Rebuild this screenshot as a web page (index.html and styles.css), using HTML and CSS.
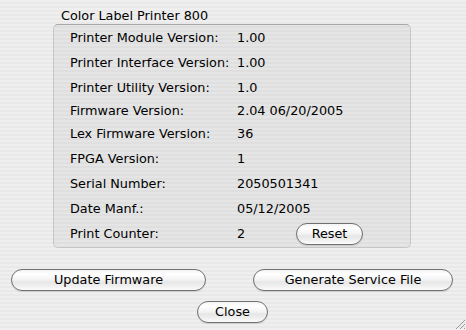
FILE: index.html
```html
<!DOCTYPE html>
<html>
<head>
<meta charset="utf-8">
<link rel="stylesheet" href="styles.css">
</head>
<body>
<div class="window">
  <div class="group-title">Color Label Printer 800</div>
  <div class="group-box">
    <div class="row"><span class="label">Printer Module Version:</span><span class="value">1.00</span></div>
    <div class="row"><span class="label">Printer Interface Version:</span><span class="value">1.00</span></div>
    <div class="row"><span class="label">Printer Utility Version:</span><span class="value">1.0</span></div>
    <div class="row short"><span class="label">Firmware Version:</span><span class="value">2.04 06/20/2005</span></div>
    <div class="row"><span class="label">Lex Firmware Version:</span><span class="value">36</span></div>
    <div class="row"><span class="label">FPGA Version:</span><span class="value">1</span></div>
    <div class="row"><span class="label">Serial Number:</span><span class="value">2050501341</span></div>
    <div class="row"><span class="label">Date Manf.:</span><span class="value">05/12/2005</span></div>
    <div class="row"><span class="label">Print Counter:</span><span class="value counter"><span class="count">2</span><button class="btn btn-reset">Reset</button></span></div>
  </div>
  <div class="actions">
    <button class="btn btn-update">Update Firmware</button>
    <button class="btn btn-generate">Generate Service File</button>
  </div>
  <div class="close-row">
    <button class="btn btn-close">Close</button>
  </div>
  <svg class="grip" width="12" height="12" viewBox="0 0 12 12">
    <line x1="11" y1="2" x2="2" y2="11" stroke="#9a9a9a" stroke-width="1"/>
    <line x1="11" y1="6" x2="6" y2="11" stroke="#9a9a9a" stroke-width="1"/>
    <line x1="11" y1="10" x2="10" y2="11" stroke="#9a9a9a" stroke-width="1"/>
  </svg>
</div>
</body>
</html>
```
FILE: styles.css
```css
html, body {
  margin: 0;
  padding: 0;
}
body {
  width: 466px;
  height: 330px;
  overflow: hidden;
  font-family: "DejaVu Sans", "Liberation Sans", sans-serif;
  font-size: 12.8px;
  color: #000;
}
.window {
  position: relative;
  width: 466px;
  height: 330px;
  background: repeating-linear-gradient(to bottom, #efefef 0px, #efefef 2px, #e9e9e9 2px, #e9e9e9 4px);
  display: flex;
  flex-direction: column;
}
.group-title {
  padding: 7px 0 0 61px;
  height: 17px;
  line-height: 17px;
}
.group-box {
  margin-left: 53px;
  width: 356px;
  height: 222px;
  border: 1px solid #c6c6c6;
  border-top-color: #a8a8a8;
  border-radius: 5px;
  background: rgba(0, 0, 0, 0.04);
  box-sizing: content-box;
  display: flex;
  flex-direction: column;
}
.row {
  display: flex;
  align-items: center;
  height: 25px;
  padding-left: 16px;
}
.row.short {
  height: 21px;
}
.label {
  width: 167px;
  flex: none;
}
.value {
  display: flex;
  align-items: center;
}
.count {
  width: 59px;
}
.actions {
  display: flex;
  justify-content: space-between;
  padding: 21px 13px 0 11px;
}
.close-row {
  display: flex;
  padding: 10px 0 0 197px;
}
.btn {
  font-family: "DejaVu Sans", "Liberation Sans", sans-serif;
  font-size: 12.8px;
  color: #000;
  height: 22px;
  border: 1px solid #707070;
  border-radius: 11px;
  background: linear-gradient(to bottom, #f4f4f4 0%, #ffffff 20%, #f2f2f2 50%, #e6e6e6 60%, #f2f2f2 85%, #fcfcfc 100%);
  box-shadow: 0 1px 1px rgba(0,0,0,0.12);
  padding: 0;
  line-height: 20px;
  text-align: center;
}
.btn-reset {
  width: 67px;
}
.btn-update {
  width: 195px;
}
.btn-generate {
  width: 200px;
}
.btn-close {
  width: 71px;
}
.grip {
  position: absolute;
  right: 0;
  bottom: 0;
}
```
